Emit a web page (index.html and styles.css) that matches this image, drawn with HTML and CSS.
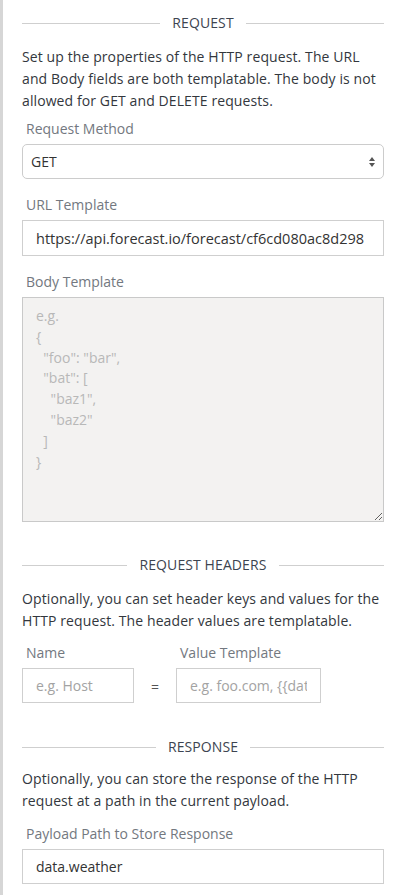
FILE: index.html
```html
<!DOCTYPE html>
<html>
<head>
<meta charset="utf-8">
<link rel="stylesheet" href="styles.css">
</head>
<body>
<div class="panel">
  <div class="section-title"><span>REQUEST</span></div>
  <p class="desc desc-first">Set up the properties of the HTTP request. The URL and Body fields are both templatable. The body is not allowed for GET and DELETE requests.</p>

  <div class="field">
    <div class="label">Request Method</div>
    <div class="select">
      <span>GET</span>
      <svg class="arrows" width="8" height="12" viewBox="0 0 8 12"><path d="M4 1 L7 5 L1 5 Z" fill="#555"/><path d="M4 11 L7 7 L1 7 Z" fill="#555"/></svg>
    </div>
  </div>

  <div class="field">
    <div class="label">URL Template</div>
    <input class="input url" type="text" value="https://api.forecast.io/forecast/cf6cd080ac8d298">
  </div>

  <div class="field">
    <div class="label">Body Template</div>
    <textarea class="body-area" placeholder="e.g.&#10;{&#10;  &quot;foo&quot;: &quot;bar&quot;,&#10;  &quot;bat&quot;: [&#10;    &quot;baz1&quot;,&#10;    &quot;baz2&quot;&#10;  ]&#10;}"></textarea>
  </div>

  <div class="section-title section-gap"><span>REQUEST HEADERS</span></div>
  <p class="desc">Optionally, you can set header keys and values for the HTTP request. The header values are templatable.</p>

  <div class="header-row">
    <div class="hfield name-field">
      <div class="label">Name</div>
      <input class="input small" type="text" placeholder="e.g. Host">
    </div>
    <div class="eq">=</div>
    <div class="hfield value-field">
      <div class="label">Value Template</div>
      <input class="input small" type="text" placeholder="e.g. foo.com, {{data.host}}">
    </div>
  </div>

  <div class="section-title section-gap2"><span>RESPONSE</span></div>
  <p class="desc desc-last">Optionally, you can store the response of the HTTP request at a path in the current payload.</p>

  <div class="field">
    <div class="label">Payload Path to Store Response</div>
    <input class="input" type="text" value="data.weather">
  </div>
</div>
</body>
</html>
```

FILE: styles.css
```css
html, body {
  margin: 0;
  padding: 0;
  background: #fff;
}

body {
  font-family: "Open Sans", "Liberation Sans", sans-serif;
  color: #363b42;
  font-size: 14px;
}

.panel {
  box-sizing: border-box;
  min-height: 100vh;
  border-left: 3px solid #d6d6d6;
  padding: 13px 16px 10px 19px;
}

.section-title {
  display: flex;
  align-items: center;
  gap: 12px;
  height: 20px;
  line-height: 20px;
  font-size: 14px;
  color: #3d4450;
  letter-spacing: 0.1px;
}

.section-title::before,
.section-title::after {
  content: "";
  flex: 1;
  height: 1px;
  background: #cfcfcf;
}

.section-gap {
  margin-top: 33px;
}

.section-gap2 {
  margin-top: 34px;
}

.desc {
  margin: 13px 0 11px;
  line-height: 22px;
  font-size: 14px;
  letter-spacing: 0.1px;
  color: #33373d;
}

.desc-first {
  margin-bottom: 7px;
}

.desc-last {
  margin-top: 11px;
  margin-bottom: 12px;
}

.field {
  margin-bottom: 16px;
}

.label {
  font-size: 14px;
  line-height: 20px;
  color: #737880;
  padding-left: 4px;
  margin-bottom: 5px;
}

.select {
  box-sizing: border-box;
  height: 35px;
  border: 1px solid #cccccc;
  border-radius: 5px;
  display: flex;
  align-items: center;
  justify-content: space-between;
  padding: 0 7px 0 8px;
  color: #333;
  font-size: 14px;
  background: #fff;
}

.arrows {
  display: block;
}

.input {
  box-sizing: border-box;
  display: block;
  width: 100%;
  height: 35px;
  border: 1px solid #cfcfcf;
  border-radius: 0;
  padding: 0 13px;
  font-family: "Open Sans", "Liberation Sans", sans-serif;
  font-size: 14px;
  color: #333;
  background: #fff;
  outline: none;
}

.input.url {
  height: 36px;
  font-size: 14.5px;
}

.input::placeholder {
  color: #a3a3a3;
}

.body-area {
  box-sizing: border-box;
  display: block;
  width: 100%;
  height: 225px;
  margin: 0;
  border: 1px solid #c9c9c9;
  border-radius: 0;
  background: #f3f2f1;
  padding: 8px 13px;
  font-family: "Open Sans", "Liberation Sans", sans-serif;
  font-size: 14px;
  line-height: 20.8px;
  color: #333;
  white-space: pre-wrap;
  outline: none;
}

.body-area::placeholder {
  color: #b8b8b8;
}

.header-row {
  display: flex;
  align-items: flex-end;
}

.name-field {
  width: 112px;
}

.value-field {
  width: 145px;
}

.eq {
  width: 42px;
  height: 35px;
  line-height: 37px;
  text-align: center;
  color: #555;
  font-size: 14px;
}
```
